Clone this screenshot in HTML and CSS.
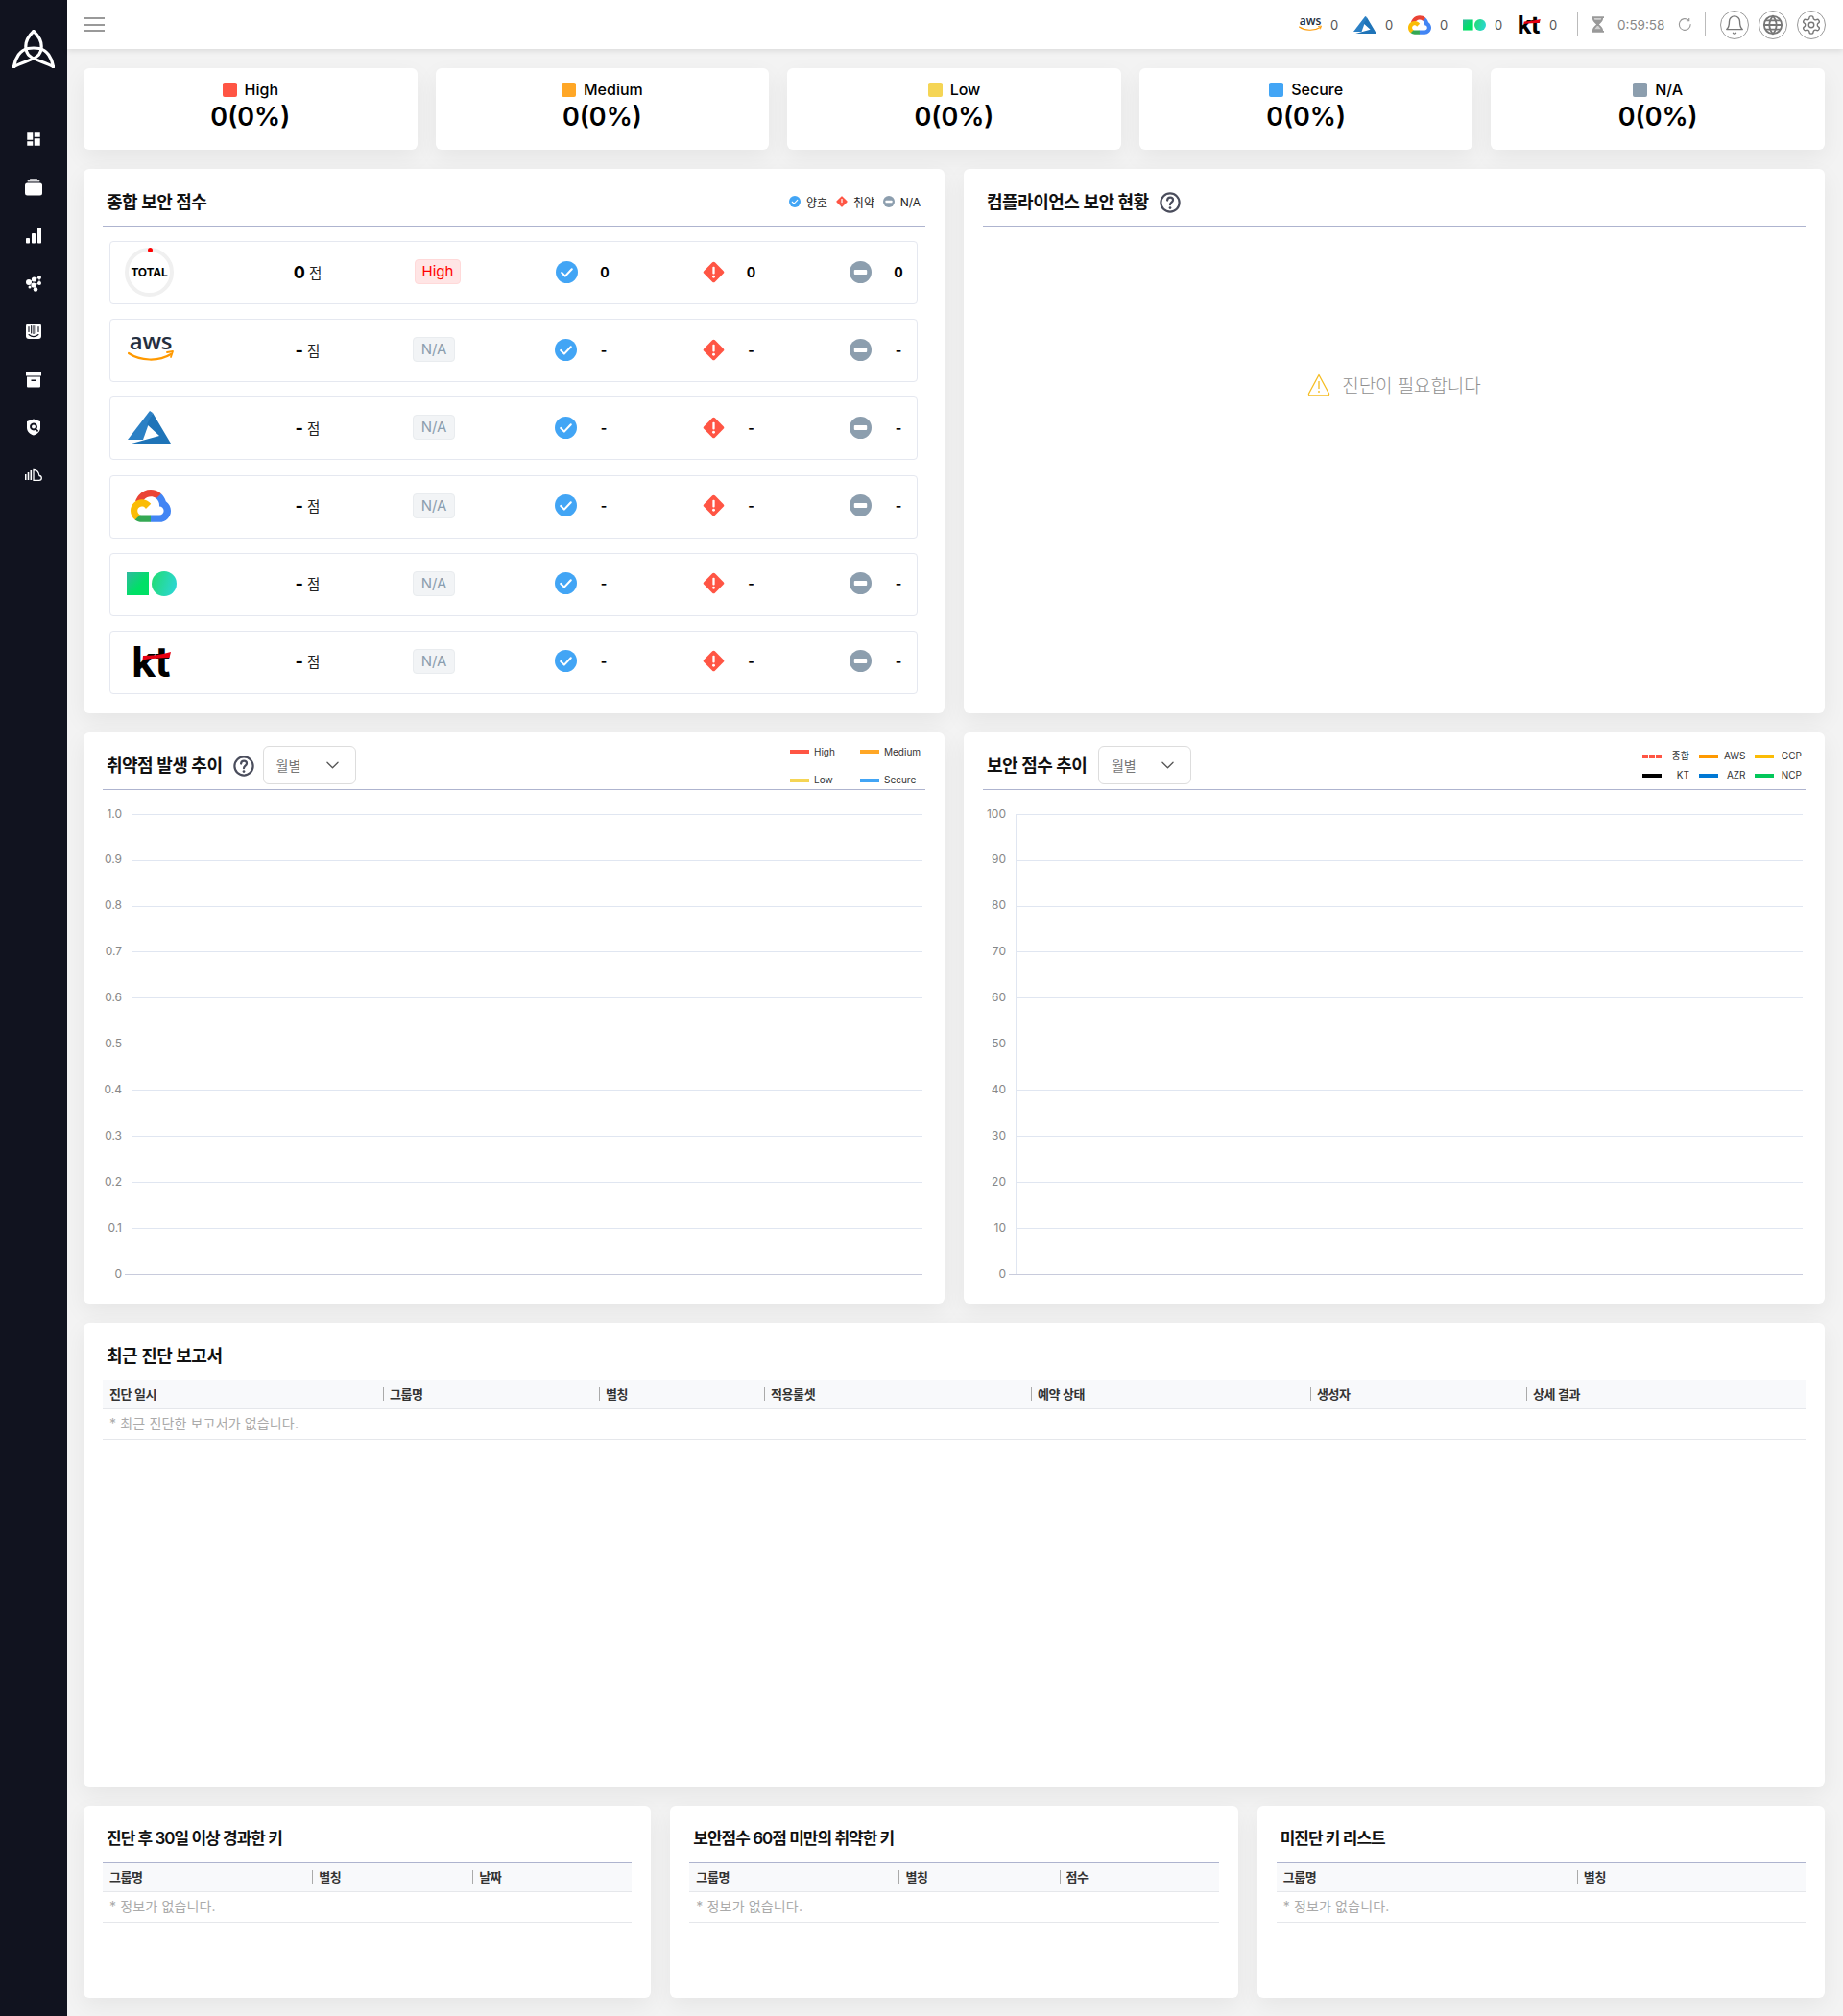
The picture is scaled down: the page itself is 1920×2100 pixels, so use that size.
FILE: index.html
```html
<!DOCTYPE html>
<html lang="ko">
<head>
<meta charset="utf-8">
<title>Dashboard</title>
<link rel="stylesheet" href="styles.css">
</head>
<body>
<svg class="defs" width="0" height="0" aria-hidden="true">
  <defs>
    <linearGradient id="ncpA" x1="0" y1="0" x2="1" y2="1"><stop offset="0" stop-color="#2fb9a0"/><stop offset=".6" stop-color="#00e066"/></linearGradient>
    <linearGradient id="ncpB" x1="0" y1="0.4" x2="1" y2="0.7"><stop offset="0" stop-color="#22dc78"/><stop offset="1" stop-color="#2cd6d6"/></linearGradient>
    <symbol id="i-aws" viewBox="0 0 48 30">
      <text x="24" y="15" text-anchor="middle" class="aws-text">aws</text>
      <path d="M1 19c12 8 31 9 44 1" fill="none" stroke="#f90" stroke-width="2.2" stroke-linecap="round"/>
      <path d="M41 18l6-1-2 6" fill="none" stroke="#f90" stroke-width="1.8" stroke-linecap="round" stroke-linejoin="round"/>
    </symbol>
    <symbol id="i-azure" viewBox="0 0 45 34">
      <path fill="#2b80c5" d="M23 0 0 30H16L26 2z"/>
      <path fill="#1f74b8" d="M26 2 45 34H4L33 26 20 14z"/>
    </symbol>
    <symbol id="i-gcp" viewBox="0 0 256 206">
      <path fill="#EA4335" d="m170.252 56.819 22.253-22.253 1.483-9.37C153.437-11.677 88.976-7.496 52.42 33.92 42.267 45.423 34.734 59.764 30.717 74.573l7.97-1.123 44.505-7.34 3.436-3.513c19.797-21.742 53.27-24.667 76.128-6.168l7.496.39Z"/>
      <path fill="#4285F4" d="M224.205 73.918c-5.115-18.836-15.616-35.769-30.217-48.722l-31.232 31.232c13.188 10.776 20.701 27.01 20.379 44.037v5.544c15.351 0 27.797 12.445 27.797 27.796 0 15.352-12.446 27.485-27.797 27.485h-55.671l-5.466 5.934v33.34l5.466 5.231h55.67c39.93.311 72.553-31.494 72.864-71.424.188-24.203-11.745-46.893-31.793-60.453"/>
      <path fill="#34A853" d="M71.87 205.796h55.593V161.29H71.87c-3.961-.001-7.797-.852-11.399-2.498l-7.887 2.42-22.409 22.253-1.952 7.574c12.567 9.489 27.9 14.825 43.647 14.757"/>
      <path fill="#FBBC05" d="M71.87 61.425C31.94 61.664-.237 94.228.001 134.159c.134 22.298 10.55 43.281 28.222 56.88l32.248-32.246c-13.99-6.321-20.208-22.786-13.887-36.776 6.32-13.99 22.786-20.208 36.775-13.888 6.161 2.785 11.097 7.72 13.883 13.888l32.248-32.248C116.043 72.507 94.669 61.29 71.87 61.425"/>
    </symbol>
    <symbol id="i-ncp" viewBox="0 0 52 28">
      <rect x="0" y="2" width="23" height="24" fill="url(#ncpA)"/>
      <circle cx="39" cy="14" r="13" fill="url(#ncpB)"/>
    </symbol>
    <symbol id="i-kt" viewBox="0 0 40 34">
      <text x="-1" y="33" class="kt-text">kt</text>
      <path fill="#e60012" d="M11 11c9 0 18-1 29-4l-1.500 6c-9 .5-18 .5-28 2.500z"/>
    </symbol>
    <symbol id="i-check" viewBox="0 0 24 24">
      <circle cx="12" cy="12" r="12" fill="#42a5f5"/>
      <path d="M6.5 12.5l3.8 3.8 7.2-7.6" fill="none" stroke="#fff" stroke-width="2.2" stroke-linecap="round" stroke-linejoin="round"/>
    </symbol>
    <symbol id="i-warn" viewBox="0 0 24 24">
      <rect x="3.5" y="3.5" width="17" height="17" rx="2" fill="#ff5544" transform="rotate(45 12 12)"/>
      <rect x="10.8" y="6" width="2.4" height="8" rx="1" fill="#fff"/>
      <circle cx="12" cy="17" r="1.5" fill="#fff"/>
    </symbol>
    <symbol id="i-minus" viewBox="0 0 24 24">
      <circle cx="12" cy="12" r="12" fill="#8c9eae"/>
      <rect x="5" y="9.5" width="14" height="5" rx="1" fill="#fff"/>
    </symbol>
    <symbol id="i-help" viewBox="0 0 24 24">
      <circle cx="12" cy="12" r="10.500" fill="none" stroke="#4a4d5c" stroke-width="2.400"/>
      <path d="M8.800 9.300c.2-2 1.600-3.100 3.300-3.100 1.900 0 3.200 1.200 3.200 2.800 0 2.600-3.300 2.700-3.300 5.400" fill="none" stroke="#4a4d5c" stroke-width="2.400" stroke-linecap="round"/>
      <circle cx="12" cy="18" r="1.500" fill="#4a4d5c"/>
    </symbol>
    <symbol id="i-chevron" viewBox="0 0 14 8">
      <path d="M1 1l6 6 6-6" fill="none" stroke="#555" stroke-width="1.4" stroke-linecap="round" stroke-linejoin="round"/>
    </symbol>
  </defs>
</svg>

<div class="app">
  <aside class="sidebar">
    <svg class="logo" viewBox="0 0 44 40">
      <g fill="none" stroke="#fff" stroke-width="3.200" stroke-linecap="round" stroke-linejoin="round">
        <path d="M22 1.500C29 8 31.500 15 29.500 22 27.500 31 13 32 1.500 38.500"/>
        <path d="M22 1.500C15 8 12.500 15 14.500 22 16.500 31 31 32 42.500 38.500"/>
        <path d="M1.500 38.500C3 29 8 21 16 19.500 19 19 25 19 28 19.500 36 21 41 29 42.500 38.500"/>
      </g>
    </svg>
    <nav class="side-nav">
      <svg class="nav-icon" viewBox="0 0 24 24"><path fill="#fff" d="M3 13h8V3H3v10zm0 8h8v-6H3v6zm10 0h8V11h-8v10zm0-18v6h8V3h-8z"/></svg>
      <svg class="nav-icon" viewBox="0 0 18 18"><g fill="#fff"><rect x="5" y="0" width="8" height="1" rx=".5" opacity=".7"/><rect x="2.500" y="2" width="13" height="1.500" rx=".7" opacity=".85"/><rect x="0" y="4.500" width="18" height="13" rx="2.500"/></g></svg>
      <svg class="nav-icon" viewBox="0 0 18 18"><g fill="#fff"><rect x="1" y="12" width="4" height="5.500" rx=".8"/><rect x="7" y="7" width="4" height="10.500" rx=".8"/><rect x="13" y="1" width="4" height="16.500" rx=".8"/></g></svg>
      <svg class="nav-icon" viewBox="0 0 18 18"><g fill="#fff"><circle cx="4" cy="8" r="3"/><circle cx="9.500" cy="5" r="2.600"/><circle cx="15" cy="3" r="2"/><circle cx="9" cy="11" r="2.600"/><circle cx="15" cy="9" r="2"/><circle cx="11" cy="15.500" r="2.300"/><circle cx="5" cy="13" r="1.500"/></g><path d="M4 8l5.500-3L15 3v6l-6 2 2 4.500" fill="none" stroke="#fff" stroke-width=".7"/></svg>
      <svg class="nav-icon" viewBox="0 0 18 18"><rect x="1" y="1" width="16" height="16" rx="3" fill="#fff"/><g stroke="#11131f" stroke-width="1.100" stroke-linecap="round" fill="none"><path d="M4 4.500v5M6.700 3.500v7.500M9 3.500v8M11.300 3.500v7.500M14 4.500v5M4 12.500c3 2.500 7 2.500 10 0"/></g></svg>
      <svg class="nav-icon" viewBox="0 0 18 18"><path fill="#fff" fill-rule="evenodd" d="M1 1.500h16v4H1zM2 6.500h14v10a1 1 0 0 1-1 1H3a1 1 0 0 1-1-1zM6.500 9.500v1.500h5V9.500z"/></svg>
      <svg class="nav-icon" viewBox="0 0 18 18"><path fill="#fff" fill-rule="evenodd" d="M9 .5 16 3v6.500c0 4-3 6.800-7 8-4-1.200-7-4-7-8V3zM9 4.500a4 4 0 1 0 1.800 7.600l2.200 2 1.200-1.300-2-2A4 4 0 0 0 9 4.500zm0 2a2 2 0 1 1 0 4 2 2 0 0 1 0-4z"/></svg>
      <svg class="nav-icon" viewBox="0 0 18 18"><g fill="none" stroke="#fff" stroke-width="1.300"><path d="M.7 8v6M3.500 6v8M6.300 4v10" stroke-width="1.600"/><path d="M9 3.500c3.500 0 5.500 3 6 6 1.300 .2 2.300 1.300 2.300 2.500 0 1.200-1 2.300-2.500 2.300H9z"/></g></svg>
    </nav>
  </aside>

  <div class="page">
    <header class="topbar">
      <button class="burger" type="button" aria-label="menu"><span></span><span></span><span></span></button>
      <div class="providers">
        <div class="provider"><svg class="p-logo"><use href="#i-aws"/></svg><span>0</span></div>
        <div class="provider"><svg class="p-logo"><use href="#i-azure"/></svg><span>0</span></div>
        <div class="provider"><svg class="p-logo"><use href="#i-gcp"/></svg><span>0</span></div>
        <div class="provider"><svg class="p-logo"><use href="#i-ncp"/></svg><span>0</span></div>
        <div class="provider"><svg class="p-logo"><use href="#i-kt"/></svg><span>0</span></div>
      </div>
      <i class="vbar"></i>
      <svg class="hourglass" viewBox="0 0 14 18"><path fill="#999" d="M0 0h14v2h-1c0 3-2 5-4.500 7C11 11 13 13 13 16h1v2H0v-2h1c0-3 2-5 4.500-7C3 7 1 5 1 2H0z"/><path fill="#fff" d="M3 2h8c0 1-.3 1.500-.6 2H3.600C3.300 3.500 3 3 3 2zM6.300 10.500 3.500 14h7l-2.800-3.500z" opacity=".55"/></svg>
      <span class="timer">0:59:58</span>
      <svg class="refresh" viewBox="0 0 16 16"><path d="M14 8a6.300 6.300 0 1 1-2-4.600" fill="none" stroke="#999" stroke-width="1.200" stroke-linecap="round"/><path d="M12.500 1v3h-3" fill="none" stroke="#999" stroke-width="1.200"/></svg>
      <i class="vbar vbar-2"></i>
      <div class="round-btns">
        <span class="round"><svg viewBox="0 0 24 24"><g fill="none" stroke="#777" stroke-width="1.500" stroke-linecap="round" stroke-linejoin="round"><path d="M6 8a6 6 0 0 1 12 0c0 7 3 9 3 9H3s3-2 3-9"/><path d="M10.300 21a1.940 1.940 0 0 0 3.400 0"/></g></svg></span>
        <span class="round"><svg viewBox="0 0 24 24"><g fill="none" stroke="#777" stroke-width="2"><circle cx="12" cy="12" r="10"/><path d="M2 12h20M3.500 7h17M3.500 17h17"/><path d="M12 2a15.300 15.300 0 0 1 4 10 15.300 15.300 0 0 1-4 10 15.300 15.300 0 0 1-4-10 15.300 15.300 0 0 1 4-10z"/></g></svg></span>
        <span class="round"><svg viewBox="0 0 24 24"><g fill="none" stroke="#777" stroke-width="1.500" stroke-linecap="round" stroke-linejoin="round"><path d="M12.220 2h-.44a2 2 0 0 0-2 2v.18a2 2 0 0 1-1 1.730l-.43.250a2 2 0 0 1-2 0l-.15-.08a2 2 0 0 0-2.730.730l-.22.380a2 2 0 0 0 .730 2.730l.15.100a2 2 0 0 1 1 1.720v.510a2 2 0 0 1-1 1.740l-.15.090a2 2 0 0 0-.730 2.730l.22.380a2 2 0 0 0 2.730.730l.15-.08a2 2 0 0 1 2 0l.43.250a2 2 0 0 1 1 1.730V20a2 2 0 0 0 2 2h.44a2 2 0 0 0 2-2v-.18a2 2 0 0 1 1-1.730l.43-.25a2 2 0 0 1 2 0l.15.08a2 2 0 0 0 2.730-.730l.22-.39a2 2 0 0 0-.730-2.730l-.15-.08a2 2 0 0 1-1-1.740v-.5a2 2 0 0 1 1-1.740l.15-.09a2 2 0 0 0 .730-2.730l-.22-.38a2 2 0 0 0-2.730-.730l-.15.08a2 2 0 0 1-2 0l-.43-.25a2 2 0 0 1-1-1.730V4a2 2 0 0 0-2-2z"/><circle cx="12" cy="12" r="3"/></g></svg></span>
      </div>
    </header>

    <main class="main">
      <section class="stats">
        <div class="stat"><div class="stat-label"><i class="swatch c-high"></i>High</div><div class="stat-num">0(0%)</div></div>
        <div class="stat"><div class="stat-label"><i class="swatch c-med"></i>Medium</div><div class="stat-num">0(0%)</div></div>
        <div class="stat"><div class="stat-label"><i class="swatch c-low"></i>Low</div><div class="stat-num">0(0%)</div></div>
        <div class="stat"><div class="stat-label"><i class="swatch c-sec"></i>Secure</div><div class="stat-num">0(0%)</div></div>
        <div class="stat"><div class="stat-label"><i class="swatch c-na"></i>N/A</div><div class="stat-num">0(0%)</div></div>
      </section>

      <section class="two-col">
        <div class="panel panel-score">
          <div class="head">
            <h2>종합 보안 점수</h2>
            <div class="key">
              <svg><use href="#i-check"/></svg><span>양호</span>
              <svg><use href="#i-warn"/></svg><span>취약</span>
              <svg><use href="#i-minus"/></svg><span>N/A</span>
            </div>
          </div>
          <div class="score-list">
            <div class="score-row">
              <div class="cell-logo"><div class="ring"><b>TOTAL</b></div></div>
              <div class="cell-score"><b>0</b> 점</div>
              <div class="cell-badge"><span class="badge badge-high">High</span></div>
              <div class="group group-total"><svg><use href="#i-check"/></svg><b>0</b></div>
              <div class="group"><svg><use href="#i-warn"/></svg><b>0</b></div>
              <div class="group"><svg><use href="#i-minus"/></svg><b>0</b></div>
            </div>
            <div class="score-row">
              <div class="cell-logo"><svg class="l-aws"><use href="#i-aws"/></svg></div>
              <div class="cell-score"><b>-</b> 점</div>
              <div class="cell-badge"><span class="badge badge-na">N/A</span></div>
              <div class="group"><svg><use href="#i-check"/></svg><b>-</b></div>
              <div class="group"><svg><use href="#i-warn"/></svg><b>-</b></div>
              <div class="group"><svg><use href="#i-minus"/></svg><b>-</b></div>
            </div>
            <div class="score-row">
              <div class="cell-logo"><svg class="l-azure"><use href="#i-azure"/></svg></div>
              <div class="cell-score"><b>-</b> 점</div>
              <div class="cell-badge"><span class="badge badge-na">N/A</span></div>
              <div class="group"><svg><use href="#i-check"/></svg><b>-</b></div>
              <div class="group"><svg><use href="#i-warn"/></svg><b>-</b></div>
              <div class="group"><svg><use href="#i-minus"/></svg><b>-</b></div>
            </div>
            <div class="score-row">
              <div class="cell-logo"><svg class="l-gcp"><use href="#i-gcp"/></svg></div>
              <div class="cell-score"><b>-</b> 점</div>
              <div class="cell-badge"><span class="badge badge-na">N/A</span></div>
              <div class="group"><svg><use href="#i-check"/></svg><b>-</b></div>
              <div class="group"><svg><use href="#i-warn"/></svg><b>-</b></div>
              <div class="group"><svg><use href="#i-minus"/></svg><b>-</b></div>
            </div>
            <div class="score-row">
              <div class="cell-logo"><svg class="l-ncp"><use href="#i-ncp"/></svg></div>
              <div class="cell-score"><b>-</b> 점</div>
              <div class="cell-badge"><span class="badge badge-na">N/A</span></div>
              <div class="group"><svg><use href="#i-check"/></svg><b>-</b></div>
              <div class="group"><svg><use href="#i-warn"/></svg><b>-</b></div>
              <div class="group"><svg><use href="#i-minus"/></svg><b>-</b></div>
            </div>
            <div class="score-row">
              <div class="cell-logo"><svg class="l-kt"><use href="#i-kt"/></svg></div>
              <div class="cell-score"><b>-</b> 점</div>
              <div class="cell-badge"><span class="badge badge-na">N/A</span></div>
              <div class="group"><svg><use href="#i-check"/></svg><b>-</b></div>
              <div class="group"><svg><use href="#i-warn"/></svg><b>-</b></div>
              <div class="group"><svg><use href="#i-minus"/></svg><b>-</b></div>
            </div>
          </div>
        </div>

        <div class="panel panel-score">
          <div class="head">
            <h2>컴플라이언스 보안 현황</h2>
            <svg class="help"><use href="#i-help"/></svg>
          </div>
          <div class="empty">
            <svg class="warn-tri" viewBox="0 0 24 24"><path d="M12 1.500 22.500 21a1.500 1.500 0 0 1-1.300 2H2.800a1.500 1.500 0 0 1-1.300-2z" fill="none" stroke="#f5bd23" stroke-width="1.300" stroke-linejoin="round"/><path d="M12 8v8" stroke="#f5bd23" stroke-width="1.300"/><circle cx="12" cy="19" r=".9" fill="#f5bd23"/></svg>
            <span>진단이 필요합니다</span>
          </div>
        </div>
      </section>

      <section class="two-col">
        <div class="panel panel-chart">
          <div class="head">
            <h2>취약점 발생 추이</h2>
            <svg class="help"><use href="#i-help"/></svg>
            <div class="select"><span>월별</span><svg><use href="#i-chevron"/></svg></div>
            <div class="legend legend-vuln">
              <div class="lg"><i class="lg-sw c-high"></i>High</div>
              <div class="lg"><i class="lg-sw c-med"></i>Medium</div>
              <div class="lg"><i class="lg-sw c-low"></i>Low</div>
              <div class="lg"><i class="lg-sw c-sec"></i>Secure</div>
            </div>
          </div>
          <svg class="chart" viewBox="0 0 857 520">
            <g class="grid">
              <path d="M30 25.500H854M30 73.500H854M30 121.500H854M30 168.500H854M30 216.500H854M30 264.500H854M30 312.500H854M30 360.500H854M30 408.500H854M30 456.500H854"/>
              <path d="M30.500 25V504"/>
            </g>
            <path class="base" d="M23 504.500H854"/>
            <g class="ticks">
              <text x="20" y="29">1.0</text><text x="20" y="76">0.9</text><text x="20" y="124">0.8</text><text x="20" y="172">0.7</text><text x="20" y="220">0.6</text><text x="20" y="268">0.5</text><text x="20" y="316">0.4</text><text x="20" y="364">0.3</text><text x="20" y="412">0.2</text><text x="20" y="460">0.1</text><text x="20" y="508">0</text>
            </g>
          </svg>
        </div>

        <div class="panel panel-chart">
          <div class="head">
            <h2>보안 점수 추이</h2>
            <div class="select select-b"><span>월별</span><svg><use href="#i-chevron"/></svg></div>
            <div class="legend legend-score">
              <div class="lg2"><i class="lg-sw2 lg-dash"></i>종합</div>
              <div class="lg2"><i class="lg-sw2 c-aws"></i>AWS</div>
              <div class="lg2"><i class="lg-sw2 c-gcp"></i>GCP</div>
              <div class="lg2"><i class="lg-sw2 c-kt"></i>KT</div>
              <div class="lg2"><i class="lg-sw2 c-azr"></i>AZR</div>
              <div class="lg2"><i class="lg-sw2 c-ncp"></i>NCP</div>
            </div>
          </div>
          <svg class="chart" viewBox="0 0 857 520">
            <g class="grid">
              <path d="M34 25.500H854M34 73.500H854M34 121.500H854M34 168.500H854M34 216.500H854M34 264.500H854M34 312.500H854M34 360.500H854M34 408.500H854M34 456.500H854"/>
              <path d="M34.500 25V504"/>
            </g>
            <path class="base" d="M27 504.500H854"/>
            <g class="ticks">
              <text x="24" y="29">100</text><text x="24" y="76">90</text><text x="24" y="124">80</text><text x="24" y="172">70</text><text x="24" y="220">60</text><text x="24" y="268">50</text><text x="24" y="316">40</text><text x="24" y="364">30</text><text x="24" y="412">20</text><text x="24" y="460">10</text><text x="24" y="508">0</text>
            </g>
          </svg>
        </div>
      </section>

      <section class="panel panel-report">
        <div class="head head-plain"><h2>최근 진단 보고서</h2></div>
        <div class="t-head cols-report">
          <div>진단 일시</div><div>그룹명</div><div>별칭</div><div>적용룰셋</div><div>예약 상태</div><div>생성자</div><div>상세 결과</div>
        </div>
        <div class="t-empty">* 최근 진단한 보고서가 없습니다.</div>
      </section>

      <section class="three-col">
        <div class="panel panel-small">
          <div class="head head-plain"><h2>진단 후 30일 이상 경과한 키</h2></div>
          <div class="t-head cols-three"><div>그룹명</div><div>별칭</div><div>날짜</div></div>
          <div class="t-empty">* 정보가 없습니다.</div>
        </div>
        <div class="panel panel-small">
          <div class="head head-plain"><h2>보안점수 60점 미만의 취약한 키</h2></div>
          <div class="t-head cols-three"><div>그룹명</div><div>별칭</div><div>점수</div></div>
          <div class="t-empty">* 정보가 없습니다.</div>
        </div>
        <div class="panel panel-small">
          <div class="head head-plain"><h2>미진단 키 리스트</h2></div>
          <div class="t-head cols-two"><div>그룹명</div><div>별칭</div></div>
          <div class="t-empty">* 정보가 없습니다.</div>
        </div>
      </section>
    </main>
  </div>
</div>
</body>
</html>
```

FILE: styles.css
```css
* { box-sizing: border-box; }
html, body { margin: 0; padding: 0; }
body {
  background: #f3f3f3;
  color: #000;
  font-family: Inter, "Noto Sans CJK KR", sans-serif;
  font-size: 14px;
}
.defs { position: absolute; }
.aws-text { font-family: "Open Sans", sans-serif; font-size: 24px; font-weight: 600; fill: #252f3e; letter-spacing: -.2px; }
.kt-text { font-family: Inter, sans-serif; font-size: 44px; font-weight: 700; fill: #000; letter-spacing: -1px; }

.app { display: flex; min-height: 2100px; }

/* sidebar */
.sidebar { width: 70px; flex: none; background: #11131f; display: flex; flex-direction: column; align-items: center; }
.logo { width: 44px; height: 40px; margin-top: 31px; }
.side-nav { display: flex; flex-direction: column; align-items: center; gap: 32px; margin-top: 65px; }
.nav-icon { width: 18px; height: 18px; display: block; }

/* topbar */
.page { flex: 1; min-width: 0; display: flex; flex-direction: column; }
.topbar {
  height: 51px; background: #fff; display: flex; align-items: center;
  padding: 0 18px 0 18px; box-shadow: 0 2px 6px rgba(0,0,0,.1); position: relative;
}
.burger { width: 21px; height: 15px; padding: 0; border: 0; background: none; display: flex; flex-direction: column; justify-content: space-between; }
.burger span { display: block; height: 2px; background: #999; }
.providers { margin-left: auto; display: flex; }
.provider { width: 57px; display: flex; align-items: center; gap: 9px; color: #555; font-size: 13px; }
.p-logo { width: 24px; height: 20px; flex: none; }
.vbar { width: 1px; height: 25px; background: #bbb; margin: 0 14px 0 5px; }
.vbar-2 { margin: 0 15px 0 13px; }
.hourglass { width: 13px; height: 17px; }
.timer { color: #888; font-size: 13.500px; width: 50px; margin-left: 14px; }
.refresh { width: 15px; height: 15px; margin-left: 13px; }
.round-btns { display: flex; gap: 10px; }
.round { width: 30px; height: 30px; border: 1px solid #999; border-radius: 50%; display: flex; align-items: center; justify-content: center; }
.round svg { width: 22px; height: 22px; }

/* main */
.main { padding: 20px 19px 19px 17px; display: flex; flex-direction: column; gap: 20px; }
.stats { display: grid; grid-template-columns: repeat(5, 1fr); gap: 19px; }
.stat, .panel { background: #fff; border-radius: 6px; box-shadow: 0 8px 24px rgba(0,0,0,.06); }
.stat { height: 85px; display: flex; flex-direction: column; align-items: center; padding-top: 12px; }
.stat-label { display: flex; align-items: center; gap: 8px; font-size: 16px; font-weight: 500; line-height: 20px; }
.swatch { width: 15px; height: 15px; border-radius: 2px; display: block; }
.stat-num { font-size: 27px; font-weight: 600; line-height: 36px; margin-top: 1px; }
.c-high { background: #ff5544; }
.c-med { background: #ffa726; }
.c-low { background: #f5d555; }
.c-sec { background: #42a5f5; }
.c-na { background: #8c9eae; }
.c-aws { background: #ff9900; }
.c-gcp { background: #fbbc05; }
.c-kt { background: #000; }
.c-azr { background: #0078d4; }
.c-ncp { background: #03c75a; }

.two-col { display: grid; grid-template-columns: 1fr 1fr; gap: 20px; }
.three-col { display: grid; grid-template-columns: repeat(3, 1fr); gap: 20px; }
.panel { padding: 0 20px; min-width: 0; }
.panel-score { height: 567px; }
.panel-chart { height: 595px; }
.panel-report { height: 483px; }
.panel-small { height: 200px; }

.head { height: 60px; display: flex; align-items: center; padding: 10px 0 0 4px; border-bottom: 1px solid #aeb4cf; }
.head-plain { border-bottom: 0; }
h2 { margin: 0; font-size: 18px; font-weight: 600; letter-spacing: -.5px; line-height: 24px; color: #111; }
.panel-small h2 { font-size: 17px; letter-spacing: -1px; position: relative; top: -1px; }
.help { width: 22px; height: 22px; margin-left: 11px; flex: none; }

.key { margin-left: auto; padding-right: 5px; display: flex; align-items: center; font-size: 12px; color: #222; margin-top: -1px; }
.key svg { width: 12px; height: 12px; margin: 0 6px 0 8.700px; }

/* score rows */
.score-list { display: flex; flex-direction: column; gap: 15.2px; margin: 15px 8px 0 7px; }
.score-row {
  height: 66px; border: 1px solid #e5e8f0; border-radius: 4px; padding-bottom: 2px;
  display: grid; grid-template-columns: 125px 160px 112px 153.500px 153.500px 1fr; align-items: center;
}
.cell-logo { display: flex; justify-content: flex-start; padding-left: 15px; }
.ring { width: 51px; height: 51px; border: 4px solid #f0f0f0; border-radius: 50%; display: flex; align-items: center; justify-content: center; position: relative; }
.ring::before { content: ""; position: absolute; top: -4px; left: 19.500px; width: 5px; height: 5px; border-radius: 50%; background: #f00; }
.ring b { font-size: 12px; font-weight: 700; letter-spacing: -.2px; }
.l-aws { width: 48px; height: 30px; margin: 0 0 0 3px; }
.l-azure { width: 45px; height: 34px; margin-left: 3px; }
.l-gcp { width: 42px; height: 34px; margin-left: 6px; }
.l-ncp { width: 52px; height: 28px; margin-left: 2px; }
.l-kt { width: 40px; height: 34px; margin-left: 8px; }
.cell-score { text-align: center; font-size: 14.500px; color: #222; padding-left: 1px; }
.cell-score b { font-size: 18px; font-weight: 700; color: #000; }
.cell-badge { display: flex; justify-content: center; }
.badge { border-radius: 4px; font-size: 15px; line-height: 24px; height: 26px; padding: 0 7px; border: 1px solid; position: relative; }
.badge-high { color: #f00; background: #ffe5e5; border-color: #ffd9d9; }
.badge-na { color: #8c9eae; background: #f2f4f6; border-color: #e9ecef; padding: 0 8px; right: 4px; }
.group { display: flex; align-items: center; padding-left: 66px; }
.group svg { width: 23px; height: 23px; flex: none; }
.group b { width: 30px; margin-left: 13px; text-align: center; font-size: 14px; font-weight: 700; }
.group-total { padding-left: 67px; }

/* empty */
.empty { display: flex; align-items: center; justify-content: center; gap: 12px; margin-top: 151px; color: #8f8f8f; font-size: 19px; font-weight: 300; letter-spacing: -.1px; }
.warn-tri { width: 24px; height: 24px; }

/* chart heads */
.select { width: 97px; height: 40px; margin: -2px 0 0 9px; border: 1px solid #ddd; border-radius: 6px; display: flex; align-items: center; justify-content: space-between; padding: 0 17px 0 13px; font-size: 14px; color: #777; flex: none; }
.select svg { width: 13px; height: 8px; }
.select-b { margin-left: 11.500px; }
.legend { margin-left: auto; font-size: 10px; color: #333; }
.legend-vuln { display: grid; grid-template-columns: 73px 68px; row-gap: 16.500px; margin-top: 1px; }
.legend-score { display: grid; grid-template-columns: repeat(3, 49px); column-gap: 9.500px; row-gap: 7px; padding-right: 4px; margin-top: 0; }
.lg { display: flex; align-items: center; gap: 5px; line-height: 13px; }
.lg-sw { width: 20px; height: 4px; display: block; }
.lg2 { display: flex; align-items: center; justify-content: space-between; line-height: 13px; }
.lg-sw2 { width: 20px; height: 4px; display: block; }
.lg-dash { background: linear-gradient(90deg, #ff5544 30%, transparent 30%, transparent 35%, #ff5544 35%, #ff5544 65%, transparent 65%, transparent 70%, #ff5544 70%); }

.chart { display: block; width: 100%; height: auto; }
.grid path { stroke: #e0e6f1; stroke-width: 1; fill: none; }
.base { stroke: #c8cbdc; stroke-width: 1; fill: none; }
.ticks text { font-size: 12px; fill: #888; text-anchor: end; font-family: Inter, sans-serif; }

/* tables */
.t-head { height: 31px; padding-bottom: 1px; background: #f8f9fb; border-top: 1px solid #aeb4cf; border-bottom: 1px solid #e5e7eb; display: grid; align-items: center; font-size: 13px; font-weight: 600; color: #333; letter-spacing: -.4px; margin-top: -1px; }
.t-head > div { padding-left: 6px; line-height: 14px; }
.t-head > div:first-child { padding-left: 7px; }
.t-head > div + div { border-left: 1px solid #aaa; }
.cols-report { grid-template-columns: 292fr 225fr 172fr 278fr 291fr 225fr 291fr; }
.cols-three { grid-template-columns: 218fr 167fr 166fr; }
.cols-two { grid-template-columns: 313fr 238fr; }
.t-empty { height: 32px; padding-left: 7px; border-bottom: 1px solid #e5e7eb; color: #aaa; font-size: 14px; font-weight: 400; line-height: 30px; letter-spacing: .15px; }
```
